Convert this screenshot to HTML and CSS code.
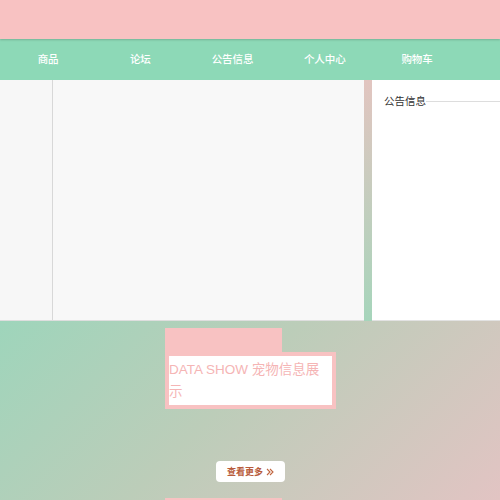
FILE: index.html
```html
<!DOCTYPE html>
<html lang="zh">
<head>
<meta charset="utf-8">
<link rel="stylesheet" href="styles.css">
</head>
<body>
<div class="topbar"></div>
<nav class="nav">
  <a class="nav-item">商品</a>
  <a class="nav-item">论坛</a>
  <a class="nav-item">公告信息</a>
  <a class="nav-item">个人中心</a>
  <a class="nav-item">购物车</a>
</nav>
<div class="main">
  <div class="left">
    <div class="left-side"></div>
    <div class="left-body"></div>
  </div>
  <div class="right">
    <div class="notice-head"><span class="notice-title">公告信息</span><span class="notice-line"></span></div>
  </div>
</div>
<section class="show">
  <div class="title-wrap">
    <div class="title-tab"></div>
    <div class="title-box">DATA SHOW 宠物信息展示</div>
  </div>
  <div class="more-row">
    <a class="more-btn">查看更多 <svg class="chev" width="8" height="8" viewBox="0 0 8 8"><path d="M1 1 L4 4 L1 7 M4 1 L7 4 L4 7" fill="none" stroke="#c0653f" stroke-width="1.1"/></svg></a>
  </div>
  <div class="title-wrap next">
    <div class="title-tab"></div>
  </div>
</section>
</body>
</html>
```
FILE: styles.css
```css
html, body {
  margin: 0;
  padding: 0;
}
body {
  font-family: "Liberation Sans", "Noto Sans CJK SC", sans-serif;
  width: 500px;
  height: 500px;
  overflow: hidden;
  background: #c8cfc0;
}
.topbar {
  height: 39px;
  background: #f8c2c2;
  box-shadow: 0 1px 2px rgba(0, 0, 0, 0.18);
  position: relative;
  z-index: 1;
}
.nav {
  height: 41px;
  background: #8dd9b7;
  display: flex;
  padding-left: 2px;
}
.nav-item {
  flex: 0 0 92.25px;
  text-align: center;
  line-height: 40px;
  font-size: 10.5px;
  font-weight: 500;
  color: #ffffff;
  font-family: "Noto Sans CJK SC", sans-serif;
}
.main {
  height: 241px;
  display: flex;
  background: linear-gradient(to bottom, #e2c5c0, #a6d5bb);
}
.left {
  width: 364px;
  display: flex;
  background: #f8f8f8;
  border-bottom: 1px solid #dedede;
  box-sizing: border-box;
}
.left-side {
  width: 52px;
  border-right: 1px solid #d8d8d8;
  background: #f7f7f7;
}
.left-body {
  flex: 1;
}
.right {
  margin-left: 8px;
  flex: 1;
  background: #ffffff;
  border-bottom: 1px solid #e2e2e2;
  box-sizing: border-box;
  padding: 14px 0 0 12px;
}
.notice-head {
  display: flex;
  align-items: center;
}
.notice-title {
  font-family: "Noto Sans CJK SC", sans-serif;
  font-size: 10.5px;
  line-height: 14px;
  color: #333333;
}
.notice-line {
  flex: 1;
  height: 1px;
  background: #dddddd;
  margin-top: 1px;
}
.show {
  height: 179px;
  padding-top: 7px;
  box-sizing: border-box;
  background: linear-gradient(135deg, #9ed5bb 0%, #bccdb9 45%, #e2c4c3 100%);
}
.title-wrap {
  margin-left: 165px;
  width: 170px;
}
.title-tab {
  width: 117px;
  height: 24px;
  background: #f8c2c2;
}
.title-box {
  border: 4px solid #f8c2c2;
  background: #ffffff;
  color: #f5b5b5;
  font-size: 13.5px;
  line-height: 22px;
  padding: 3px 0 2px 0;
  width: 163px;
}
.more-row {
  display: flex;
  justify-content: center;
  margin-top: 52px;
}
.more-btn {
  display: flex;
  align-items: center;
  gap: 3px;
  height: 21px;
  width: 69px;
  justify-content: center;
  background: #ffffff;
  border-radius: 4px;
  font-family: "Noto Sans CJK SC", sans-serif;
  font-size: 9px;
  font-weight: 700;
  color: #b85c3c;
  margin-left: 1px;
}
.chev {
  display: block;
}
.next {
  margin-top: 16px;
}
```
